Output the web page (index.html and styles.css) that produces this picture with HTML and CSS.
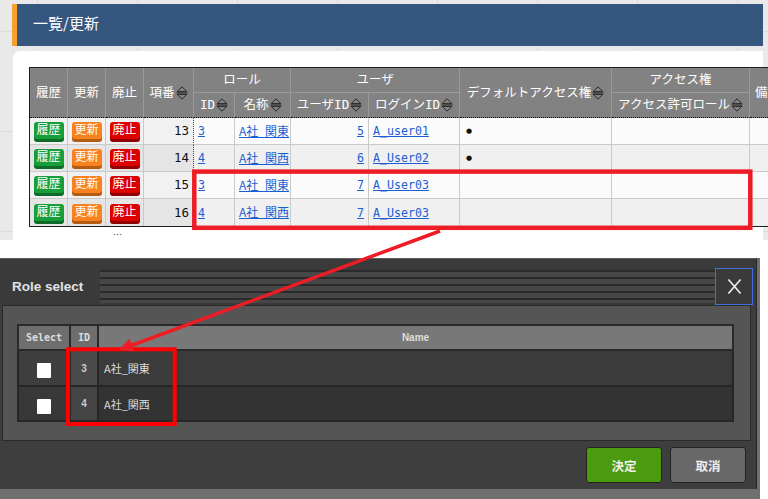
FILE: index.html
```html
<!DOCTYPE html>
<html lang="ja">
<head>
<meta charset="utf-8">
<title>一覧/更新</title>
<link rel="stylesheet" href="styles.css">
</head>
<body>
<section class="shot1">
  <div class="titlebar">一覧/更新</div>
  <div class="card">
    <table class="grid">
      <colgroup>
        <col class="c38"><col class="c38"><col class="c38"><col class="c50">
        <col class="c41"><col class="c56"><col class="c78"><col class="c91">
        <col class="c152"><col class="c138"><col class="c80">
      </colgroup>
      <thead>
        <tr>
          <th rowspan="2" class="bt">履歴</th>
          <th rowspan="2" class="bt">更新</th>
          <th rowspan="2" class="bt">廃止</th>
          <th rowspan="2" class="bt">項番<svg class="sort" viewBox="0 0 12 14"><path d="M6 0.8L1.2 5.6H10.8Z M0.5 7H11.5 M1.2 8.4H10.8L6 13.2Z"/></svg></th>
          <th colspan="2">ロール</th>
          <th colspan="2">ユーザ</th>
          <th rowspan="2" class="bt">デフォルトアクセス権<svg class="sort" viewBox="0 0 12 14"><path d="M6 0.8L1.2 5.6H10.8Z M0.5 7H11.5 M1.2 8.4H10.8L6 13.2Z"/></svg></th>
          <th>アクセス権</th>
          <th rowspan="2" class="bt left">備考</th>
        </tr>
        <tr>
          <th class="bt">ID<svg class="sort" viewBox="0 0 12 14"><path d="M6 0.8L1.2 5.6H10.8Z M0.5 7H11.5 M1.2 8.4H10.8L6 13.2Z"/></svg></th>
          <th class="bt">名称<svg class="sort" viewBox="0 0 12 14"><path d="M6 0.8L1.2 5.6H10.8Z M0.5 7H11.5 M1.2 8.4H10.8L6 13.2Z"/></svg></th>
          <th class="bt">ユーザID<svg class="sort" viewBox="0 0 12 14"><path d="M6 0.8L1.2 5.6H10.8Z M0.5 7H11.5 M1.2 8.4H10.8L6 13.2Z"/></svg></th>
          <th class="bt">ログインID<svg class="sort" viewBox="0 0 12 14"><path d="M6 0.8L1.2 5.6H10.8Z M0.5 7H11.5 M1.2 8.4H10.8L6 13.2Z"/></svg></th>
          <th class="bt">アクセス許可ロール<svg class="sort" viewBox="0 0 12 14"><path d="M6 0.8L1.2 5.6H10.8Z M0.5 7H11.5 M1.2 8.4H10.8L6 13.2Z"/></svg></th>
        </tr>
      </thead>
      <tbody>
        <tr>
          <td class="act"><span class="btn g">履歴</span></td>
          <td class="act"><span class="btn o">更新</span></td>
          <td class="act"><span class="btn r">廃止</span></td>
          <td class="act no">13</td>
          <td><a class="m">3</a></td>
          <td><a class="jp">A社_関東</a></td>
          <td class="num"><a class="m">5</a></td>
          <td><a class="m">A_user01</a></td>
          <td class="dot">●</td>
          <td></td>
          <td></td>
        </tr>
        <tr>
          <td class="act"><span class="btn g">履歴</span></td>
          <td class="act"><span class="btn o">更新</span></td>
          <td class="act"><span class="btn r">廃止</span></td>
          <td class="act no">14</td>
          <td><a class="m">4</a></td>
          <td><a class="jp">A社_関西</a></td>
          <td class="num"><a class="m">6</a></td>
          <td><a class="m">A_User02</a></td>
          <td class="dot">●</td>
          <td></td>
          <td></td>
        </tr>
        <tr>
          <td class="act"><span class="btn g">履歴</span></td>
          <td class="act"><span class="btn o">更新</span></td>
          <td class="act"><span class="btn r">廃止</span></td>
          <td class="act no">15</td>
          <td><a class="m">3</a></td>
          <td><a class="jp">A社_関東</a></td>
          <td class="num"><a class="m">7</a></td>
          <td><a class="m">A_User03</a></td>
          <td></td>
          <td></td>
          <td></td>
        </tr>
        <tr>
          <td class="act"><span class="btn g">履歴</span></td>
          <td class="act"><span class="btn o">更新</span></td>
          <td class="act"><span class="btn r">廃止</span></td>
          <td class="act no">16</td>
          <td><a class="m">4</a></td>
          <td><a class="jp">A社_関西</a></td>
          <td class="num"><a class="m">7</a></td>
          <td><a class="m">A_User03</a></td>
          <td></td>
          <td></td>
          <td></td>
        </tr>
      </tbody>
    </table>
    <div class="more">…</div>
  </div>
</section>

<div class="gap"></div>

<section class="shot2">
  <div class="dialog">
    <div class="dlg-head">
      <span class="dlg-title">Role select</span>
      <span class="stripes"></span>
      <span class="close"><svg viewBox="0 0 16 18" class="xicon"><path d="M1.5 1.5L14.5 16.5M14.5 1.5L1.5 16.5"/></svg></span>
    </div>
    <div class="dlg-body">
      <table class="rtable">
        <colgroup><col class="s"><col class="i"><col></colgroup>
        <thead>
          <tr><th>Select</th><th>ID</th><th class="nm">Name</th></tr>
        </thead>
        <tbody>
          <tr><td class="ck"><span class="box"></span></td><td class="rid">3</td><td class="rn">A社_関東</td></tr>
          <tr><td class="ck"><span class="box"></span></td><td class="rid">4</td><td class="rn">A社_関西</td></tr>
        </tbody>
      </table>
    </div>
    <div class="dlg-foot">
      <span class="dbtn ok">決定</span>
      <span class="dbtn cancel">取消</span>
    </div>
  </div>
</section>

<svg class="annot" viewBox="0 0 768 499" width="768" height="499">
  <rect x="194.3" y="171.6" width="556" height="56.2" fill="none" stroke="#ee1c25" stroke-width="4.5"/>
  <rect x="68" y="349.3" width="106.7" height="74.7" fill="none" stroke="#ff0000" stroke-width="4"/>
  <line x1="440" y1="231" x2="130" y2="346" stroke="#ee1c25" stroke-width="3.5"/>
  <polygon points="119,350 134.5,351.5 129.5,338.5" fill="#ee1c25"/>
</svg>
</body>
</html>
```

FILE: styles.css
```css
* { box-sizing: border-box; }
html, body { margin: 0; padding: 0; }
body {
  width: 768px;
  height: 499px;
  overflow: hidden;
  background: #ffffff;
  position: relative;
  font-family: "Noto Sans CJK JP", "Noto Sans", sans-serif;
}

/* ---------- upper screenshot ---------- */
.shot1 {
  height: 240px;
  overflow: hidden;
  padding-top: 4px;
  background-color: #e9e9e9;
  background-image:
    linear-gradient(90deg, transparent 37px, #dcdcdc 37px, #dcdcdc 38px, transparent 38px),
    linear-gradient(180deg, transparent 31px, #dcdcdc 31px, #dcdcdc 32px, transparent 32px);
  background-size: 100px 100px, 100px 100px;
}
.titlebar {
  margin: 0 5px 0 12px;
  height: 42px;
  background: #34567f;
  border-left: 5px solid #f7a12c;
  color: #ffffff;
  font-size: 15px;
  line-height: 38px;
  padding-left: 16px;
}
.card {
  margin: 5px 5px 0 13px;
  height: 200px;
  background: #ffffff;
  border-radius: 7px 0 0 0;
  padding: 16px 0 0 16px;
}
.grid {
  table-layout: fixed;
  width: 802px;
  border-collapse: separate;
  border-spacing: 0;
  border: 1px solid #1e1e1e;
  font-family: "DejaVu Sans Mono", "Noto Sans CJK JP", monospace;
  font-size: 12.5px;
}
.c38 { width: 38px; }
.c41 { width: 41px; }
.c50 { width: 50px; }
.c56 { width: 56px; }
.c78 { width: 78px; }
.c80 { width: 80px; }
.c91 { width: 91px; }
.c138 { width: 138px; }
.c152 { width: 152px; }

.grid th {
  background: #828282;
  color: #ffffff;
  font-weight: normal;
  height: 25px;
  padding: 0 1px;
  line-height: 16px;
  white-space: nowrap;
  overflow: hidden;
  border-right: 1px solid #9a9a9a;
  border-bottom: 1px solid #9a9a9a;
  text-align: center;
}
.grid th.left { text-align: left; padding-left: 5px; }
.grid th.bt { border-bottom: 1px dotted #111111; }
.sort {
  width: 12px;
  height: 14px;
  vertical-align: -3px;
  margin-left: 1px;
  fill: none;
  stroke: #1e1e1e;
  stroke-width: 0.9;
}
.grid td {
  height: 27px;
  padding: 0 4px;
  border-right: 1px solid #c9c9c9;
  border-bottom: 1px solid #c9c9c9;
  background: #fbfbfb;
  white-space: nowrap;
  line-height: 16px;
  color: #111111;
}
.grid tbody tr:nth-child(even) td { background: #f0f0f0; }
.grid tbody tr:last-child td { border-bottom: none; }
.grid td.act { background: #f1f1f1; text-align: center; padding: 0; }
.grid tbody tr:nth-child(even) td.act { background: #e5e5e5; }
.grid td.no { text-align: right; padding-right: 4px; border-right: 1px dotted #444444; }
.grid td.num { text-align: right; }
.grid td.dot { font-size: 7px; padding-left: 6px; font-family: "DejaVu Sans", sans-serif; }
.grid a {
  color: #1a5fd2;
  text-decoration: underline;
  font-size: 12.5px;
}
.grid a.m { font-size: 11.6px; }
.grid a.jp { font-family: "Noto Sans CJK JP", sans-serif; font-size: 12px; }

.btn {
  display: inline-block;
  width: 30px;
  height: 17px;
  border-radius: 3px;
  color: #ffffff;
  font-size: 12px;
  line-height: 17px;
  vertical-align: middle;
  margin-top: -2px;
}
.btn.g { background: #189d3b; box-shadow: 0 3px 0 #0f6b28; }
.btn.o { background: #f8821f; box-shadow: 0 3px 0 #b45c12; }
.btn.r { background: #dc0000; box-shadow: 0 3px 0 #900000; }

.more {
  margin: 3px 0 0 84px;
  font-size: 9px;
  line-height: 10px;
  color: #333333;
}

.gap { height: 18px; background: #ffffff; }

/* ---------- dialog screenshot ---------- */
.shot2 {
  width: 760px;
  height: 241px;
  background: #707070;
}
.dialog {
  width: 757px;
  height: 231px;
  background: #3d3d3d;
  border-top: 1px solid #5e5e5e;
  border-right: 1px solid #262626;
  display: flex;
  flex-direction: column;
}
.dlg-head {
  height: 46px;
  display: flex;
  align-items: center;
  background: #3a3a3a;
}
.dlg-title {
  width: 88px;
  margin-left: 12px;
  margin-top: 9px;
  color: #e2e2e2;
  font-family: "Liberation Sans", Arial, sans-serif;
  font-weight: bold;
  font-size: 13.5px;
}
.stripes {
  flex: 1;
  height: 33px;
  margin-top: 8px;
  background: repeating-linear-gradient(180deg, #2a2a2a 0, #2a2a2a 2px, #474747 2px, #474747 7px);
}
.close {
  width: 38px;
  height: 37px;
  margin: 9px 3px 0 0;
  border: 1px solid #3d70d8;
  background: #3a3a3a;
  display: flex;
  align-items: center;
  justify-content: center;
}
.xicon {
  width: 15px;
  height: 17px;
  fill: none;
  stroke: #eeeeee;
  stroke-width: 1.8;
}
.dlg-body {
  height: 136px;
  margin: 0 5px 0 2px;
  background: #555555;
  border: 1px solid #2b2b2b;
  padding: 18px 15px 0 14px;
}
.rtable {
  width: 717px;
  border-collapse: collapse;
  table-layout: fixed;
  border: 2px solid #262626;
}
.rtable col.s { width: 52px; }
.rtable col.i { width: 28px; }
.rtable th {
  height: 25px;
  background: #6e6e6e;
  color: #dddddd;
  font-family: "DejaVu Sans Mono", monospace;
  font-weight: bold;
  font-size: 10px;
  border: 2px solid #2a2a2a;
  text-align: center;
  padding: 0;
}
.rtable th.nm {
  background: #787878;
  font-family: "Liberation Sans", Arial, sans-serif;
  font-size: 10px;
}
.rtable td {
  height: 36px;
  background: #3b3b3b;
  border: 2px solid #262626;
  color: #dddddd;
  padding: 0;
}
.rtable tbody tr:nth-child(2) td { height: 35px; background: #333333; }
.rtable td.ck { background: #3e3e3e; text-align: center; }
.rtable tbody tr:nth-child(2) td.ck { background: #383838; }
.rtable td.rid {
  background: #4a4a4a;
  text-align: center;
  font-family: "Liberation Sans", Arial, sans-serif;
  font-weight: bold;
  font-size: 10px;
  color: #cccccc;
}
.rtable tbody tr:nth-child(2) td.rid { background: #444444; }
.rtable td.rn { padding-left: 5px; font-size: 11px; }
.box {
  display: inline-block;
  width: 14px;
  height: 15px;
  background: #ffffff;
  border-radius: 1px;
  vertical-align: middle;
}
.dlg-foot {
  flex: 1;
  display: flex;
  justify-content: flex-end;
  gap: 8px;
  padding: 6px 10px 0 0;
  background: #3e3e3e;
}
.dbtn {
  width: 76px;
  height: 36px;
  border: 1px solid #232323;
  border-radius: 3px;
  color: #eeeeee;
  font-weight: bold;
  font-size: 12.5px;
  display: flex;
  align-items: center;
  justify-content: center;
}
.dbtn.ok { background: #4a9c0e; }
.dbtn.cancel { background: #686868; }

/* ---------- annotation overlay ---------- */
.annot {
  position: absolute;
  left: 0;
  top: 0;
  pointer-events: none;
}
```
